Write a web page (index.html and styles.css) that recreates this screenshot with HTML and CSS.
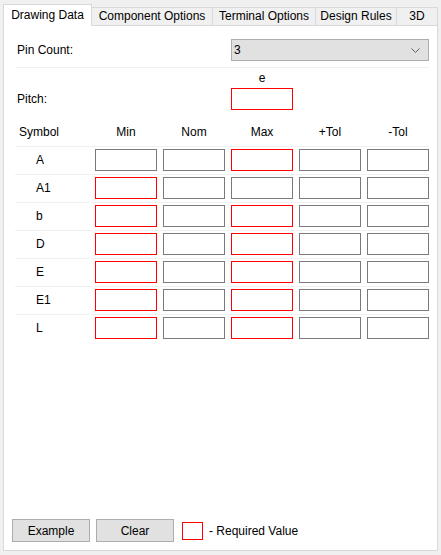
FILE: index.html
```html
<!DOCTYPE html>
<html lang="en">
<head>
  <meta charset="UTF-8" />
  <title>Footprint Wizard</title>
  <link rel="stylesheet" href="styles.css">
</head>
<body>
  <div class="window">
    <div class="tabs">
      <div class="tab active">Drawing Data</div>
      <div class="tab tab-component">Component Options</div>
      <div class="tab tab-terminal">Terminal Options</div>
      <div class="tab tab-rules">Design Rules</div>
      <div class="tab tab-3d">3D</div>
    </div>

    <div class="panel">
      <div class="form">
        <div class="grid pin-row">
          <span class="label">Pin Count:</span>
          <div class="select">
            <span>3</span>
            <svg class="chevron" width="9" height="5" viewBox="0 0 9 5">
              <polyline points="0.5,0.5 4.5,4.5 8.5,0.5" fill="none" stroke="#606060" stroke-width="1" />
            </svg>
          </div>
        </div>

        <div class="grid pitch-head">
          <span class="col-max">e</span>
        </div>
        <div class="grid pitch-row">
          <span class="label">Pitch:</span>
          <div class="box required col-max"></div>
        </div>

        <div class="grid head-row">
          <span class="symbol-head">Symbol</span>
          <span>Min</span>
          <span>Nom</span>
          <span>Max</span>
          <span>+Tol</span>
          <span>-Tol</span>
        </div>

        <div class="grid dim-row">
          <span class="symbol">A</span>
          <div class="box"></div><div class="box"></div><div class="box required"></div><div class="box"></div><div class="box"></div>
        </div>
        <div class="grid dim-row">
          <span class="symbol">A1</span>
          <div class="box required"></div><div class="box"></div><div class="box"></div><div class="box"></div><div class="box"></div>
        </div>
        <div class="grid dim-row">
          <span class="symbol">b</span>
          <div class="box required"></div><div class="box"></div><div class="box required"></div><div class="box"></div><div class="box"></div>
        </div>
        <div class="grid dim-row">
          <span class="symbol">D</span>
          <div class="box required"></div><div class="box"></div><div class="box required"></div><div class="box"></div><div class="box"></div>
        </div>
        <div class="grid dim-row">
          <span class="symbol">E</span>
          <div class="box required"></div><div class="box"></div><div class="box required"></div><div class="box"></div><div class="box"></div>
        </div>
        <div class="grid dim-row">
          <span class="symbol">E1</span>
          <div class="box required"></div><div class="box"></div><div class="box required"></div><div class="box"></div><div class="box"></div>
        </div>
        <div class="grid dim-row">
          <span class="symbol">L</span>
          <div class="box required"></div><div class="box"></div><div class="box required"></div><div class="box"></div><div class="box"></div>
        </div>
      </div>

      <div class="footer">
        <button class="btn">Example</button>
        <button class="btn">Clear</button>
        <div class="legend-box"></div>
        <span class="legend-text">- Required Value</span>
      </div>
    </div>
  </div>
</body>
</html>
```

FILE: styles.css
```css
:root {
  --bg: #f0f0f0;
  --panel: #fff;
  --border: #d9d9d9;
  --line: #f0f0f0;
  --field: #7a7a7a;
  --required: #ff0000;
  --control: #e1e1e1;
  --control-border: #adadad;
  --text: #000;
}

body {
  margin: 0;
  background-color: var(--bg);
  color: var(--text);
  font-family: 'Liberation Sans', Arial, sans-serif;
  font-size: 12px;
}

.window {
  padding: 4px 3px 0;
}

/* tab strip */
.tabs {
  display: flex;
  height: 22px;
  margin-bottom: -1px;
  position: relative;
  z-index: 1;
}

.tab {
  box-sizing: border-box;
  height: 18px;
  margin-top: 3px;
  border-top: 1px solid var(--border);
  border-right: 1px solid var(--border);
  background-color: var(--bg);
  text-align: center;
  line-height: 17px;
}

.tab.active {
  width: 89px;
  height: 22px;
  margin-top: 0;
  border-left: 1px solid var(--border);
  background-color: var(--panel);
  line-height: 21px;
}

.tab-component { width: 121px; }
.tab-terminal { width: 103px; }
.tab-rules { width: 81px; }
.tab-3d { width: 41px; }

/* main panel */
.panel {
  box-sizing: border-box;
  height: 526px;
  border: 1px solid var(--border);
  background-color: var(--panel);
  padding: 0 8px 8px;
  display: flex;
  flex-direction: column;
}

.form {
  margin-left: 3px;
}

.grid {
  display: grid;
  grid-template-columns: 74px repeat(5, 62px);
  column-gap: 6px;
}

.label {
  padding-left: 2px;
  align-self: center;
}

.pin-row {
  padding: 13px 0 6px;
  border-bottom: 1px solid var(--line);
}

.select {
  grid-column: 4 / 7;
  box-sizing: border-box;
  height: 22px;
  border: 1px solid var(--control-border);
  background-color: var(--control);
  display: flex;
  align-items: center;
  justify-content: space-between;
  padding: 0 8px 0 2px;
}

.chevron {
  display: block;
}

.pitch-head {
  height: 20px;
  line-height: 20px;
}

.col-max {
  grid-column: 4;
  text-align: center;
}

.head-row {
  padding: 14px 0 6px;
  line-height: 16px;
  text-align: center;
}

.head-row .symbol-head {
  text-align: left;
  padding-left: 4px;
}

.dim-row {
  border-top: 1px solid var(--line);
  padding: 2px 0 3px;
}

.symbol {
  padding-left: 21px;
  align-self: center;
}

.box {
  box-sizing: border-box;
  height: 22px;
  border: 1px solid var(--field);
  background-color: var(--panel);
}

.box.required {
  border-color: var(--required);
}

/* bottom bar */
.footer {
  margin-top: auto;
  display: flex;
  align-items: center;
  gap: 6px;
}

.btn {
  box-sizing: border-box;
  width: 78px;
  height: 23px;
  border: 1px solid var(--control-border);
  background-color: var(--control);
  font-family: inherit;
  font-size: 12px;
  color: var(--text);
  padding: 0;
}

.legend-box {
  box-sizing: border-box;
  width: 21px;
  height: 18px;
  margin-left: 2px;
  border: 1px solid var(--required);
}
```
